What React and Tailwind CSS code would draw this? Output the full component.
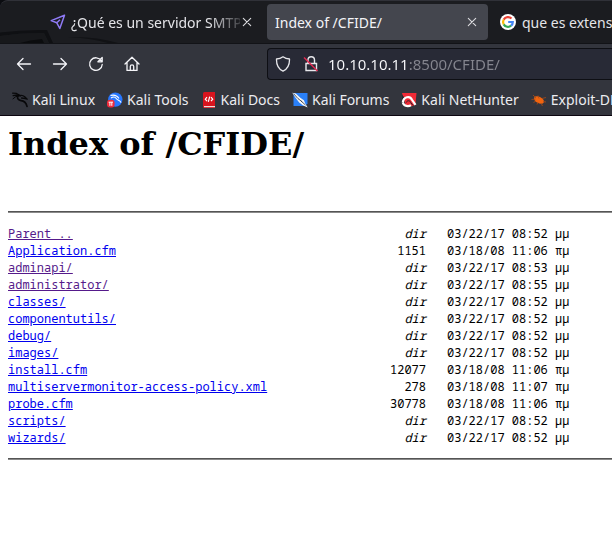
function CloseIcon() {
  return (
    <svg viewBox="0 0 10 10" className="size-[10px]" fill="none" stroke="#dcdce0" strokeWidth="1.1" strokeLinecap="round">
      <path d="M1.3 1.3l7.4 7.4M8.700 1.300L1.300 8.700" />
    </svg>
  );
}

function PlaneIcon() {
  return (
    <svg viewBox="0 0 16 16" className="size-4 shrink-0" fill="none" stroke="#8f7af5" strokeWidth="1.5" strokeLinejoin="round">
      <path d="M14.500 1.200L1.200 6.600l5.600 2.200L9.800 14.500z M6.800 8.800L10 5.800" />
    </svg>
  );
}

function GoogleIcon() {
  return (
    <svg viewBox="0 0 16 16" className="size-4 shrink-0">
      <circle cx="8" cy="8" r="8" fill="#fff" />
      <g fill="none" strokeWidth="2.2">
        <path d="M11.5 4.600A4.900 4.900 0 0 0 3.700 5.600" stroke="#ea4335" />
        <path d="M3.700 5.600a4.900 4.900 0 0 0 0 4.800" stroke="#fbbc05" />
        <path d="M3.700 10.400a4.900 4.900 0 0 0 7.400 1.300" stroke="#34a853" />
        <path d="M11.100 11.700A4.900 4.900 0 0 0 12.800 8H8.200" stroke="#4285f4" />
      </g>
    </svg>
  );
}

function KaliIcon() {
  return (
    <svg viewBox="0 0 16 16" className="size-4 shrink-0" fill="none" stroke="#08080a" strokeLinecap="round" strokeLinejoin="round">
      <path d="M.6 1.200l4 .2 2.600 1.600" strokeWidth="1.200" />
      <path d="M1.200 3.600L5 3l3.400.8" strokeWidth="1.400" />
      <path d="M1 6.800l2.800-2.200 2.600-.4" strokeWidth="1" />
      <path d="M6 3.600c-1.200 2.800.4 4.800 3 5 2.800.2 5 1.400 6 5.800" strokeWidth="1.700" />
      <path d="M7.500 3.600c2-.4 4 0 5.200 1.200l2.500 2.400-3-.8-2.600-.4" strokeWidth="1.300" />
    </svg>
  );
}

function ToolsIcon() {
  return (
    <svg viewBox="0 0 16 16" className="size-4 shrink-0">
      <circle cx="8.300" cy="7.600" r="7.200" fill="#2777ff" />
      <path d="M3.500 3.500c3.500-1 6.500 0 8.500 3M4 6c2-1.400 4-1.400 5 .2.600 2 4 1.400 5 4.400" fill="none" stroke="#fff" strokeWidth="1.100" />
      <rect x="0" y="7.800" width="7.600" height="7.600" rx="3" fill="#ee2b3b" />
      <path d="M1.600 10.200h4.400M2.900 10.200v3.600M4.800 10.200v3.600" stroke="#fff" strokeWidth="1" />
    </svg>
  );
}

function DocsIcon() {
  return (
    <svg viewBox="0 0 12 16" className="h-4 w-3 shrink-0">
      <path d="M0 1.500Q0 0 1.500 0H12v16H1.500Q0 16 0 14.500z" fill="#d9141e" />
      <path d="M1 14h11v1.200H1z" fill="#f0dcdc" />
      <path d="M4 5.200L2.300 7.200 4 9.200M8 5.200l1.700 2L8 9.200M6.700 4.600L5.300 9.800" fill="none" stroke="#fff" strokeWidth="1.200" />
    </svg>
  );
}

function ForumsIcon() {
  return (
    <svg viewBox="0 0 16 16" className="size-4 shrink-0">
      <path d="M1.500 1H15.500V11.500L13 14H1.500z" fill="#2a80f8" />
      <path d="M.3.8l3.400.8 4.600 4.200 3.600 2.400 1.300 3.200 2.500 4-5-2.200-3.500-2.800L3.700 6z" fill="#f4f6f8" />
      <path d="M1.500 1.600l4.500 5 4.200 3.200M9 9l4.500 4" fill="none" stroke="#2b3038" strokeWidth=".8" />
    </svg>
  );
}

function NetHunterIcon() {
  return (
    <svg viewBox="0 0 16 16" className="size-4 shrink-0">
      <path d="M1 1H15.500L14.500 11.500 12 14H5z" fill="#f02a36" />
      <path d="M1 3l3 3-3 5z" fill="#24262c" />
      <path d="M1.800 10.500C2.500 4.600 9 3.400 11 7.800l3.500 5M1.800 10.500c1 4.200 6 4 8.200 2.700" fill="none" stroke="#fff" strokeWidth="2.200" />
      <path d="M5.200 10.500c1-2.500 4-2.200 4.500 0l2.300 3" fill="none" stroke="#24262c" strokeWidth="1" />
    </svg>
  );
}

function ExploitIcon() {
  return (
    <svg viewBox="0 0 16 16" className="size-4 shrink-0">
      <ellipse cx="8" cy="8" rx="5.400" ry="3.200" transform="rotate(28 8 8)" fill="#f0640f" />
      <path d="M.5 7.500l4 -.5M2 3l3 3M7 3.500l1 3M11 6.500l4-1M12 9.500l3 .5M5 9l-2.500 1.500M7 10l-1 2.500M10 11l1.500 3" stroke="#a84a18" strokeWidth=".8" />
    </svg>
  );
}

const bookmarks = [
  { label: "Kali Linux", Icon: KaliIcon },
  { label: "Kali Tools", Icon: ToolsIcon },
  { label: "Kali Docs", Icon: DocsIcon },
  { label: "Kali Forums", Icon: ForumsIcon },
  { label: "Kali NetHunter", Icon: NetHunterIcon },
  { label: "Exploit-DB", Icon: ExploitIcon },
];

const navButtons = [
  { label: "Back", d: "M14.500 8H1.500M7 2.500L1.500 8 7 13.500" },
  { label: "Forward", d: "M1.500 8h13M9 2.500L14.500 8 9 13.500" },
  { label: "Reload", d: "M13.300 4.800A6.300 6.300 0 1 0 14.200 8.500M14.200 1.500V5.800H9.900z" },
  { label: "Home", d: "M1 8L8 1.200 15 8M3 6.500V14.400H13V6.500M6.300 14.400V10.500a1.700 1.700 0 0 1 3.400 0V14.400" },
];

const files = [
  ["Parent ..", "dir", "03/22/17 08:52 μμ", true],
  ["Application.cfm", "1151", "03/18/08 11:06 πμ", false],
  ["adminapi/", "dir", "03/22/17 08:53 μμ", true],
  ["administrator/", "dir", "03/22/17 08:55 μμ", true],
  ["classes/", "dir", "03/22/17 08:52 μμ", false],
  ["componentutils/", "dir", "03/22/17 08:52 μμ", false],
  ["debug/", "dir", "03/22/17 08:52 μμ", false],
  ["images/", "dir", "03/22/17 08:52 μμ", false],
  ["install.cfm", "12077", "03/18/08 11:06 πμ", false],
  ["multiservermonitor-access-policy.xml", "278", "03/18/08 11:07 πμ", false],
  ["probe.cfm", "30778", "03/18/08 11:06 πμ", false],
  ["scripts/", "dir", "03/22/17 08:52 μμ", false],
  ["wizards/", "dir", "03/22/17 08:52 μμ", false],
];

function ThemeArt() {
  return (
    <svg viewBox="0 0 120 14" className="absolute bottom-0 left-0 h-[14px] w-[120px]" aria-hidden="true">
      <path d="M0 3.500Q22 .5 47 1l6 13h-4L44 4Q22 3.500 0 7z" fill="#0f1013" />
      <path d="M0 7Q22 3.500 44 4l5 10H0z" fill="#17181b" />
      <path d="M20 14Q30 11 42 10l2 4z" fill="#0b0c0e" />
      <path d="M68 8Q95 7 118 14h-10Q90 9 68 8z" fill="#111215" />
    </svg>
  );
}

function TabBar() {
  return (
    <div className="relative flex h-[43px] items-center overflow-hidden rounded-tl-lg border-t border-[#303138] bg-[#1b1c20] pl-[50px] text-[14px] whitespace-nowrap">
      <ThemeArt />
      <div className="relative flex w-[217px] shrink-0 items-center">
        <button className="flex w-[190px] items-center gap-[5px] text-[#e4e4e8]">
          <PlaneIcon />
          <span className="flex-1 overflow-hidden text-left [mask-image:linear-gradient(90deg,#000_82%,transparent_104%)]">¿Qué es un servidor SMTP</span>
        </button>
        <button aria-label="Close tab" className="ml-[2px]"><CloseIcon /></button>
      </div>
      <div className="flex h-9 w-[221px] shrink-0 items-center justify-between rounded bg-[#44464e] pr-[11px] pl-2 text-[#f4f4f8]">
        <button>Index of /CFIDE/</button>
        <button aria-label="Close tab"><CloseIcon /></button>
      </div>
      <button className="ml-3 flex shrink-0 items-center gap-[6px] text-[#e4e4e8]">
        <GoogleIcon />
        que es extension
      </button>
    </div>
  );
}

function Toolbar() {
  return (
    <div className="flex h-[41px] items-center border-t border-[#121317] pl-4">
      <div className="flex w-[251px] shrink-0 gap-5">
        {navButtons.map((b) => (
          <button key={b.label} aria-label={b.label}>
            <svg viewBox="0 0 16 16" className="size-4" fill="none" stroke="#f4f4f8" strokeWidth="1.300" strokeLinecap="round" strokeLinejoin="round">
              <path d={b.d} />
            </svg>
          </button>
        ))}
      </div>
      <div className="flex h-8 min-w-0 flex-1 items-center rounded-l border border-r-0 border-[#0e0f14] bg-[#282a36] pl-[7px]">
        <svg viewBox="0 0 16 16" className="size-4 shrink-0" fill="none" stroke="#e8e8ec" strokeWidth="1.300" strokeLinejoin="round">
          <path d="M8 .8C6 2.400 4 3 1.500 3 1.300 8.500 3 13 8 15.200 13 13 14.700 8.500 14.500 3 12 3 10 2.400 8 .8z" />
        </svg>
        <svg viewBox="0 0 16 16" className="ml-3 size-4 shrink-0" fill="none" stroke="#e8e8ec" strokeWidth="1.400">
          <path d="M5 7V4a3 3 0 0 1 6.500 0v3M3 7.500h10.500v7H3z" />
          <path d="M1 1.500l13.500 13.500" stroke="#e22850" />
        </svg>
        <input
          aria-label="Address"
          defaultValue="10.10.10.11:8500/CFIDE/"
          className="ml-[9px] min-w-0 flex-1 bg-[linear-gradient(90deg,#fbfbfe_80px,#85868f_80px)] bg-clip-text text-[15px] text-transparent outline-none"
        />
      </div>
    </div>
  );
}

export default function App() {
  return (
    <div className="min-h-screen overflow-hidden bg-white text-black">
      <header className='bg-[#0b0c10] font-["Noto_Sans",sans-serif]'>
        <TabBar />
        <div className="border-b border-[#0c0610] bg-[#33353d]">
          <Toolbar />
          <nav className="flex h-[31px] items-center gap-3 overflow-hidden pl-3 text-[14px] whitespace-nowrap text-[#ececf0]">
            {bookmarks.map(({ label, Icon }) => (
              <a key={label} href="#" className="flex shrink-0 items-center gap-1">
                <span className="flex w-4 justify-center"><Icon /></span>
                {label}
              </a>
            ))}
          </nav>
        </div>
      </header>
      <main className="pl-2">
        <h1 className='pt-2 font-["DejaVu_Serif",serif] text-[32px] leading-10 font-bold'>Index of /CFIDE/</h1>
        <hr className="mt-[47px] border-t border-b border-t-[#555555] border-b-[#8a8a8a]" />
        <table className='mt-3 table-fixed font-["Noto_Sans_Mono","DejaVu_Sans_Mono",monospace] text-[12px] leading-[17px] whitespace-nowrap'>
          <tbody>
            {files.map(([name, size, date, visited]) => (
              <tr key={name}>
                <td className="w-[360px] p-0">
                  <a href="#" className={visited ? "text-[#551a8b] underline" : "text-[#0000ee] underline"}>{name}</a>
                </td>
                <td className={size === "dir" ? "w-[58px] p-0 text-right italic" : "w-[58px] p-0 text-right"}>{size}</td>
                <td className="p-0 pl-[21px]">{date}</td>
              </tr>
            ))}
          </tbody>
        </table>
        <hr className="mt-3 border-t border-b border-t-[#555555] border-b-[#8a8a8a]" />
      </main>
    </div>
  );
}
